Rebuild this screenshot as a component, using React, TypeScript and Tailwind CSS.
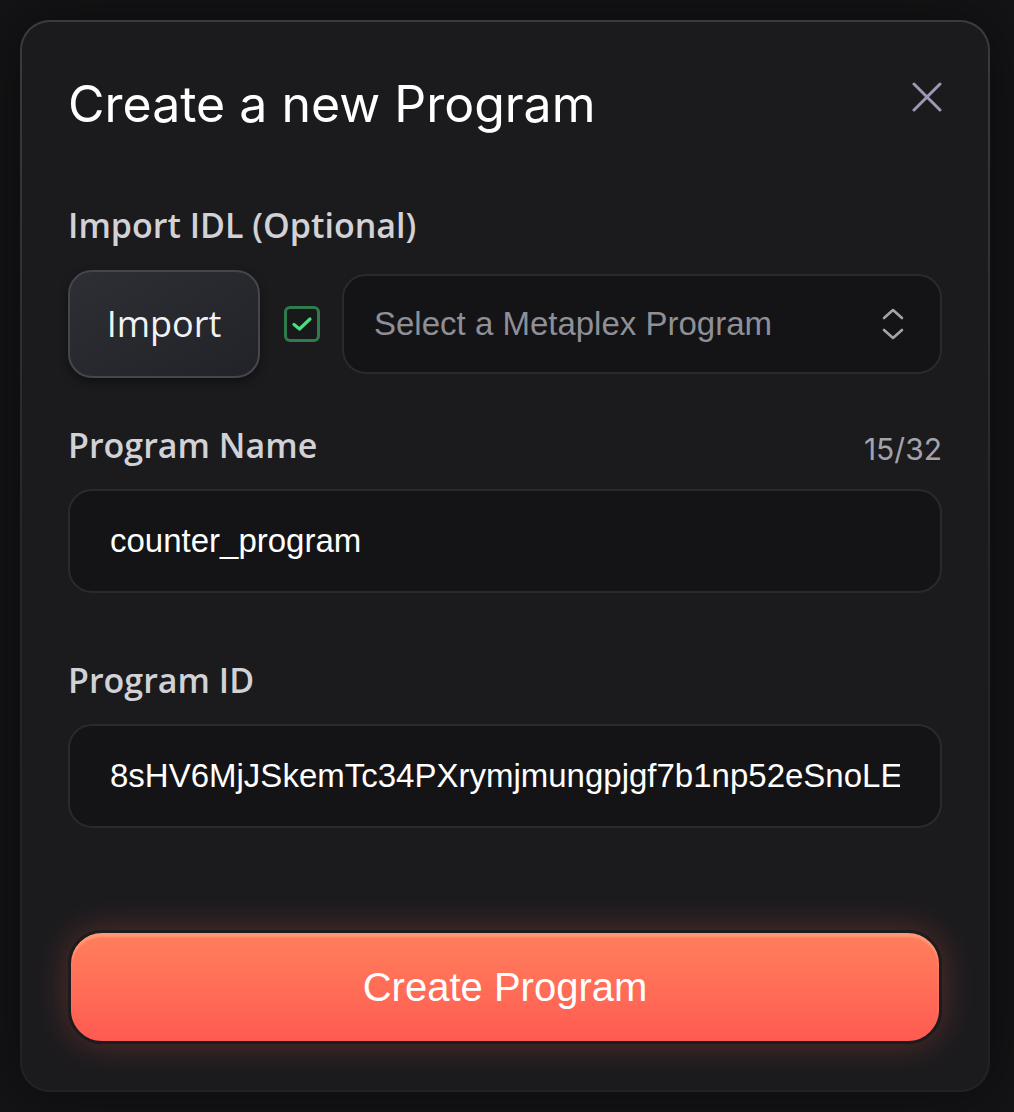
import React from 'react';

const inter = { fontFamily: 'Inter, "Noto Sans", sans-serif' };
const sans = { fontFamily: '"Open Sans", "Noto Sans", sans-serif' };
const arial = { fontFamily: '"Liberation Sans", Arial, sans-serif' };

const Label: React.FC<{ children: React.ReactNode }> = ({ children }) => (
  <div className="text-[34px] leading-[40px] font-semibold text-[#d2d2d6]" style={sans}>
    {children}
  </div>
);

const App: React.FC = () => {
  return (
    <div className="min-h-[1112px] w-full bg-[#141416] pt-5 pl-5">
      <div className="w-[970px] rounded-[30px] bg-gradient-to-b from-[#3a3b42] via-[#25262a] to-[#222225] p-[2px] shadow-[0_0_60px_rgba(0,0,0,0.5)]">
        <div className="rounded-[28px] bg-[#1b1b1e] px-[46px] pt-[54px] pb-[46px]">
          <div className="flex items-start justify-between">
            <h1 className="text-[50px] leading-[56px] font-normal text-white" style={inter}>
              Create a new Program
            </h1>
            <button className="mt-[2px] mr-[-4px] p-1 text-[#9b99b3]">
              <svg width="30" height="30" viewBox="0 0 30 30" fill="none">
                <path d="M2 2L28 28M28 2L2 28" stroke="currentColor" strokeWidth="3" strokeLinecap="round" />
              </svg>
            </button>
          </div>

          <div className="mt-[73px]">
            <Label>Import IDL (Optional)</Label>
          </div>

          <div className="mt-[25px] flex items-center">
            <button
              className="flex h-[108px] w-[192px] items-center justify-center rounded-[24px] border-2 border-[#45464c] bg-gradient-to-br from-[#2e2f35] to-[#222328] text-[36px] text-[#f2f2f4] shadow-[0_4px_10px_rgba(0,0,0,0.4)]"
              style={sans}
            >
              Import
            </button>
            <div className="ml-[24px] flex h-[36px] w-[36px] items-center justify-center rounded-[6px] border-[3px] border-[#2f7b4e] bg-[#18191b]">
              <svg width="22" height="16" viewBox="0 0 22 16" fill="none">
                <path d="M3 8.5L8.5 13L19 3" stroke="#4ade80" strokeWidth="3.2" strokeLinecap="round" strokeLinejoin="round" />
              </svg>
            </div>
            <div className="ml-[22px] flex h-[100px] flex-1 items-center justify-between rounded-[24px] border-2 border-[#2a2a2e] bg-[#141416] pl-[30px] pr-[36px]">
              <span className="text-[33px] text-[#8f8f97]" style={arial}>
                Select a Metaplex Program
              </span>
              <svg width="22" height="32" viewBox="0 0 22 32" fill="none">
                <path d="M2 10L11 2L20 10M2 22L11 30L20 22" stroke="#a3a3ab" strokeWidth="2.6" strokeLinecap="round" strokeLinejoin="round" />
              </svg>
            </div>
          </div>

          <div className="mt-[47px] flex h-[40px] items-center justify-between">
            <Label>Program Name</Label>
            <span className="mt-[8px] text-[30px] leading-[40px] text-[#a3a3ab]" style={inter}>
              15/32
            </span>
          </div>
          <div className="mt-[24px] flex h-[104px] items-center rounded-[24px] border-2 border-[#2a2a2e] bg-[#141416] px-[40px]">
            <span className="text-[33px] text-white" style={arial}>
              counter_program
            </span>
          </div>

          <div className="mt-[67px]">
            <Label>Program ID</Label>
          </div>
          <div className="mt-[24px] flex h-[104px] items-center overflow-hidden rounded-[24px] border-2 border-[#2a2a2e] bg-[#141416] px-[40px]">
            <span className="overflow-hidden whitespace-nowrap text-[33px] text-white" style={arial}>
              8sHV6MjJSkemTc34PXrymjmungpjgf7b1np52eSnoLEK
            </span>
          </div>

          <button
            className="mt-[102px] flex h-[114px] w-full items-center justify-center rounded-[34px] border-[3px] border-[#1c1c1e] bg-gradient-to-b from-[#ff7f5c] to-[#ff5a52] text-[40px] text-white shadow-[0_0_34px_rgba(255,96,80,0.28),inset_0_4px_2px_rgba(255,200,170,0.35)]"
            style={arial}
          >
            Create Program
          </button>
        </div>
      </div>
    </div>
  );
};

export default App;
